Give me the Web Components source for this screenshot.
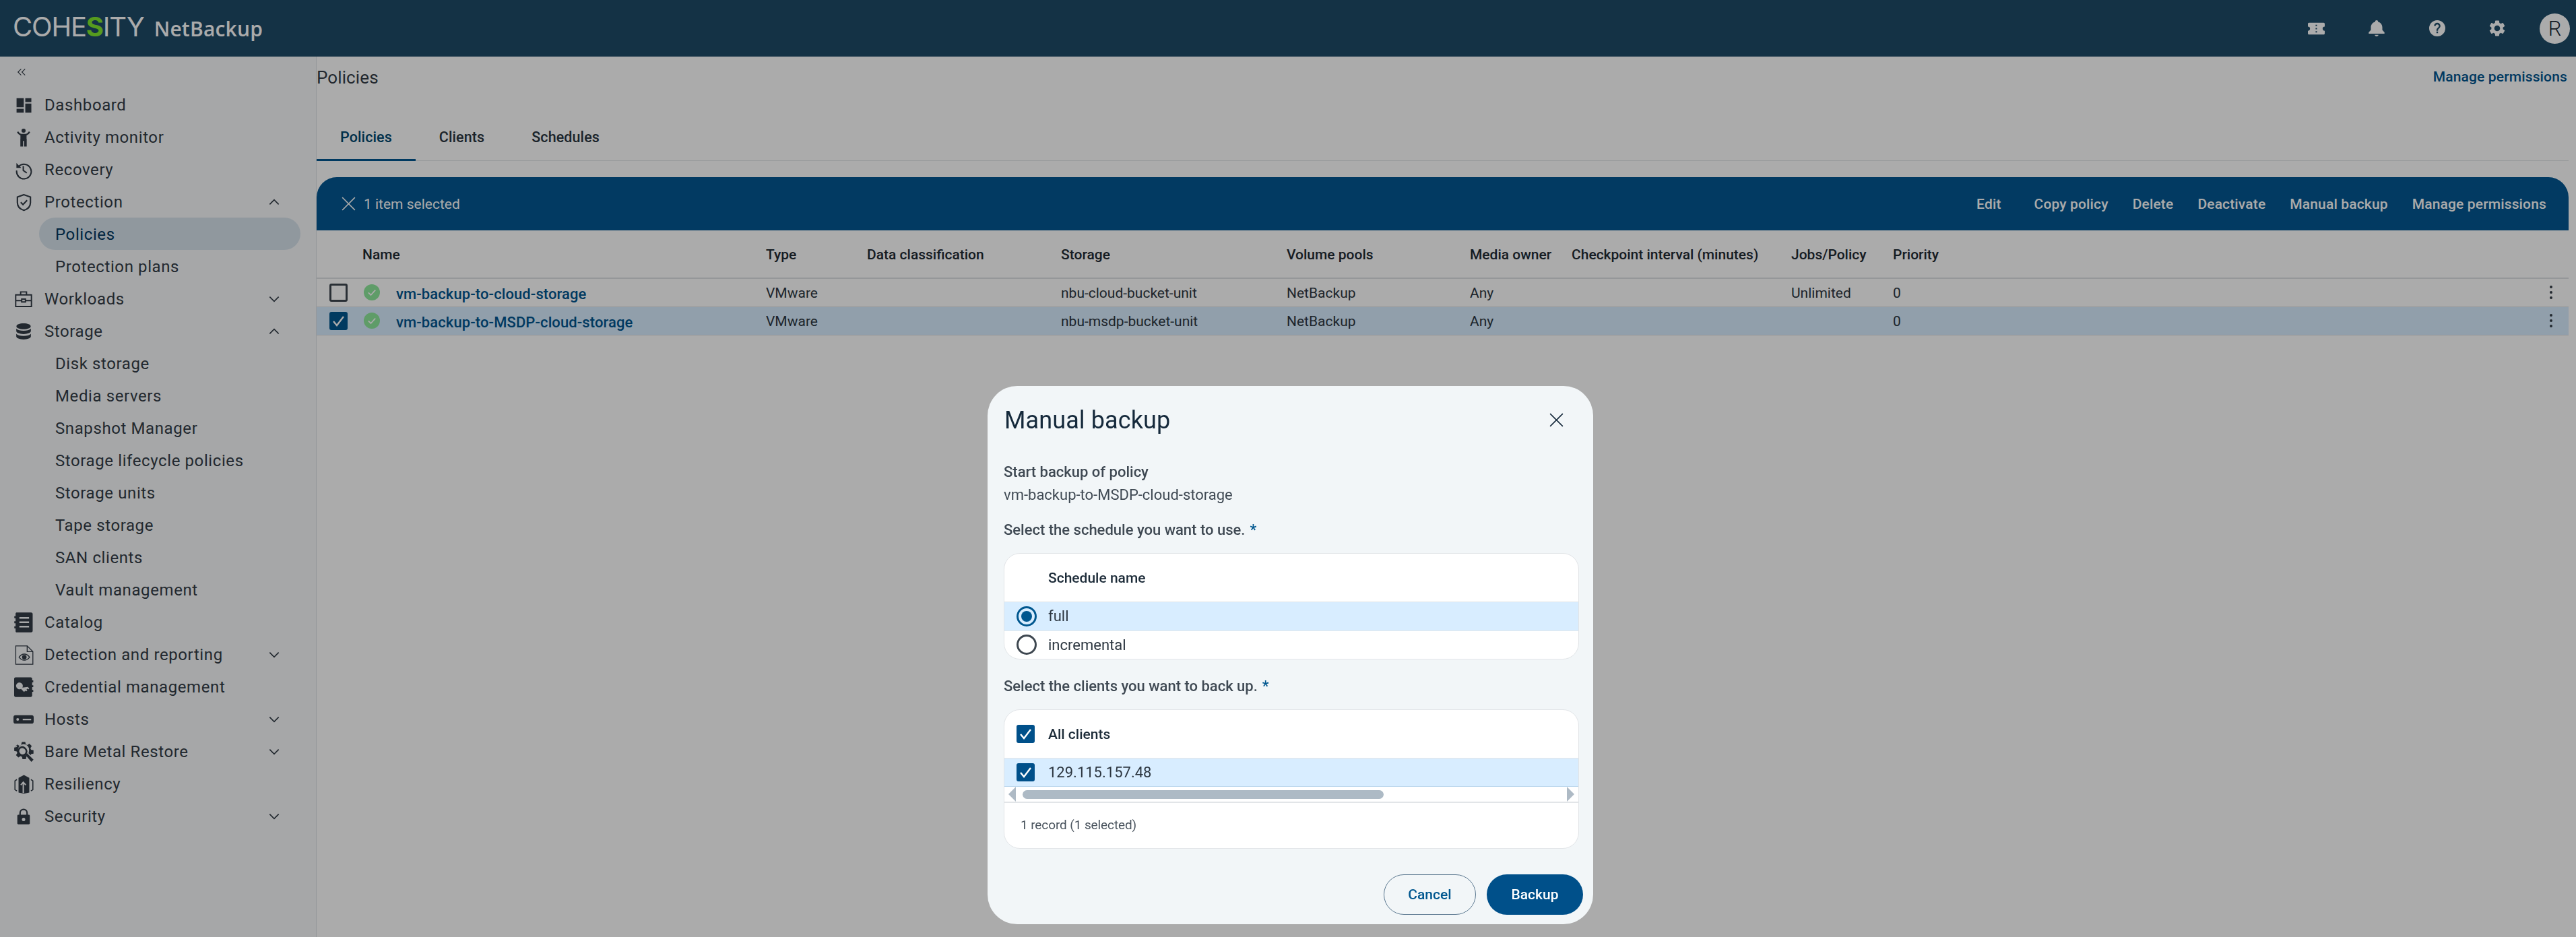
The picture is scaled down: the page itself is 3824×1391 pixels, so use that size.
<!DOCTYPE html>
<html lang="en">
<head>
<meta charset="utf-8">
<title>Policies - NetBackup</title>
<style>
html,body{margin:0;height:100%;overflow:hidden;background:#fff;font-family:Roboto,"Liberation Sans",sans-serif;}
</style>
</head>
<body>
<app-shell></app-shell>
<script>
const ICONS={
 dashboard:'<path fill="currentColor" d="M2.300 2.500h9.500v12H2.300zM2.300 16.500h9.500v5H2.300zM13.800 2.500h8v5h-8zM13.800 9.500h8v12h-8z"/>',
 activity:'<circle fill="currentColor" cx="12" cy="3.400" r="2.600"/><path fill="currentColor" d="M3.600 5.300 5.200 4.200c1.200 1.900 2.800 3.100 4.300 3.300h5c1.500-.2 3.100-1.400 4.300-3.300l1.600 1.100c-1.200 2-2.900 3.500-4.600 4.100V14h.2v9.500h-3.300v-7h-1.400v7H7.900V14H8V9.400C6.400 8.800 4.800 7.300 3.600 5.300z"/>',
 history:'<path fill="none" stroke="currentColor" stroke-width="1.900" d="M5.400 7.400A10 10 0 1 1 2.600 13"/><path fill="currentColor" d="M2.200 2.800v6.600h6.600z"/><path fill="none" stroke="currentColor" stroke-width="1.900" d="M11.600 7v6l4.800 3.400"/>',
 shield:'<path fill="none" stroke="currentColor" stroke-width="1.900" d="M12 1.800 3.400 4.800v7.400c0 5 3.400 8.600 8.600 10.200 5.200-1.600 8.600-5.200 8.600-10.200V4.800z"/><path fill="none" stroke="currentColor" stroke-width="1.900" d="m7.800 11.800 3 3 5.400-5.600"/>',
 briefcase:'<path fill="none" stroke="currentColor" stroke-width="1.800" d="M1.200 6.200h21.600v16H1.200zM8 6.200V2.200h8v4M1.200 14h8M14.800 14h8M9.400 12h5.200v4H9.400z"/>',
 storage:'<path fill="currentColor" d="M12 1c5.400 0 9.800 1.700 9.800 4s-4.400 4-9.800 4-9.800-1.700-9.800-4 4.400-4 9.800-4zM2 8c1.800 2 5.600 3 10 3s8.200-1 10-3v3.600c0 2.200-4.500 4-10 4s-10-1.800-10-4zM2 15.200c1.800 2 5.600 3 10 3s8.200-1 10-3V19c0 2.200-4.500 4-10 4S2 21.200 2 19z"/>',
 catalog:'<path fill="currentColor" fill-rule="evenodd" d="M2.500 1.500C2.500.7 3.200.2 4 .2h17c1 0 1.800.8 1.800 1.800v20c0 1-.8 1.800-1.800 1.800H4c-.8 0-1.500-.6-1.500-1.300V19H1v-2.400h1.500V13H1v-2.400h1.500V7H1V4.600h1.500zM7 5.500v2h11.500v-2zM7 10.800v2h11.500v-2zM7 16v2h11.500v-2z"/>',
 detect:'<path fill="none" stroke="currentColor" stroke-width="1.100" d="M2 .7h14L23 7.700v15.600H2z"/><path fill="none" stroke="currentColor" stroke-width="1.100" d="M16 .7v7h7"/><path fill="none" stroke="currentColor" stroke-width="1.100" d="M6 14.500c3.600-5 9.400-5 13 0-3.600 5-9.400 5-13 0z"/><circle fill="currentColor" cx="12.500" cy="14.500" r="2.800"/>',
 credential:'<path fill="currentColor" fill-rule="evenodd" d="M2.500.3h18c.9 0 1.700.8 1.700 1.700v2h1.300v2.300h-1.300v3.400h1.300V12h-1.300v3.400h1.300v2.300h-1.300V22c0 .9-.8 1.700-1.700 1.700h-18c-.9 0-1.700-.8-1.700-1.700V2C.8 1.100 1.600.3 2.500.3zM10.600 12.500a4 4 0 1 0-1.600 1.600l3.600 3.600 1.500-1.500 1 1 1.400-1.400-1-1 1.100-1.100 1 1 1.200-1.200-1.800-1.800z"/>',
 hosts:'<path fill="currentColor" fill-rule="evenodd" d="M2.500 7h19A2.500 2.500 0 0 1 24 9.500v5a2.500 2.500 0 0 1-2.500 2.500h-19A2.500 2.500 0 0 1 0 14.500v-5A2.500 2.500 0 0 1 2.500 7zM5 10.400a1.600 1.600 0 1 0 0 3.200 1.600 1.600 0 0 0 0-3.200zm6 .7v1.800h10v-1.800z"/>',
 bmr:'<path fill="currentColor" d="M10 .3h4l.6 2.900 1.800.8 2.500-1.600 2.800 2.800-1.600 2.500.8 1.800 2.900.6v4l-2.900.6-.6 1.400-2.400-2.400.6-2.700a6.600 6.600 0 1 0-4.300 4.800l1.800 1.800-.7.3-.6 2.900h-4l-.6-2.900-1.800-.8-2.500 1.600-2.800-2.800 1.600-2.500-.8-1.800-2.900-.6v-4l2.900-.6.8-1.800L1.800 6.100l2.800-2.800 2.500 1.600 1.800-.8z"/><path fill="none" stroke="currentColor" stroke-width="2" d="M7.700 7.400a5 5 0 0 1 6.900 6.900l-1 1a5 5 0 0 1-6.900-6.900z"/><path fill="currentColor" d="m14 15.500 2-2 7.800 7.800-2.600 2.600z"/>',
 resiliency:'<path fill="currentColor" fill-rule="evenodd" d="M12 .5l6.600 3.500v18L12 23.300 5.400 22V4zM11.200 8 7.600 12.200l1.200 1 1.600-1.900v11l1.700.3V11.300l1.600 1.900 1.200-1-3.700-4.200z"/><path fill="none" stroke="currentColor" stroke-width="1.300" d="M3.400 6 1 7.500v11L3.400 20M20.600 6 23 7.500v11L20.600 20"/>',
 lock:'<path fill="currentColor" fill-rule="evenodd" d="M12 .5a6.300 6.300 0 0 1 6.300 6.300v2.700h1.400c.9 0 1.600.7 1.600 1.600v11c0 .9-.7 1.600-1.600 1.600H4.300c-.9 0-1.600-.7-1.600-1.600v-11c0-.9.7-1.600 1.600-1.600h1.400V6.800A6.300 6.300 0 0 1 12 .5zm0 2.200a4.100 4.100 0 0 0-4.100 4.100v2.700h8.200V6.800A4.100 4.100 0 0 0 12 2.700zM12 14a2.500 2.500 0 1 0 0 5 2.500 2.500 0 0 0 0-5z"/>',
 up:'<path fill="none" stroke="currentColor" stroke-width="2" d="m4 16 8-8 8 8"/>',
 down:'<path fill="none" stroke="currentColor" stroke-width="2" d="m4 8 8 8 8-8"/>',
 collapse:'<path fill="none" stroke="currentColor" stroke-width="2" d="M11 4 3 12l8 8M21 4l-8 8 8 8"/>',
 close:'<path fill="none" stroke="currentColor" stroke-width="1.500" d="m3 3 18 18M21 3 3 21"/>',
 ticket:'<path fill="currentColor" fill-rule="evenodd" d="M1.500 3.500h21c.8 0 1.500.7 1.500 1.500v4a3 3 0 0 0 0 6v4c0 .8-.7 1.500-1.500 1.500h-21C.7 20.500 0 19.800 0 19v-4a3 3 0 0 0 0-6V5c0-.8.7-1.500 1.500-1.500zM11 6.500v2h2v-2zM11 11v2h2v-2zM11 15.500v2h2v-2z"/>',
 bell:'<path fill="currentColor" d="M12 24c1.500 0 2.700-.9 2.700-2.200H9.300C9.300 23.100 10.500 24 12 24zm8.500-9.600V11c0-4.300-2.300-7.600-6.300-8.500V2c0-1.200-1-2-2.200-2S9.800.8 9.800 2v.5c-4 .9-6.300 4.200-6.300 8.500v3.400L.3 18v2h23.400v-2z"/>',
 help:'<path fill="currentColor" d="M12 0a12 12 0 1 0 0 24 12 12 0 0 0 0-24zm1.200 19.200h-2.400v-2.400h2.400zm2.400-7.800-1 1.100c-.9.800-1.400 1.500-1.400 3.300h-2.400v-.6c0-1.300.5-2.500 1.400-3.400l1.500-1.500c.4-.4.700-1 .7-1.700 0-1.300-1.100-2.400-2.400-2.400S9.600 7.300 9.600 8.600H7.200a4.800 4.800 0 0 1 9.600 0c0 1-.5 2-1.200 2.800z"/>',
 gear:'<path fill="currentColor" transform="translate(-2.400 -2.400) scale(1.200)" d="M19.140 12.940c.04-.3.06-.61.06-.94 0-.32-.02-.64-.07-.94l2.030-1.580c.18-.14.23-.41.12-.61l-1.920-3.320c-.12-.22-.37-.29-.59-.22l-2.390.96c-.5-.38-1.030-.7-1.620-.94l-.36-2.540c-.04-.24-.24-.41-.48-.41h-3.840c-.24 0-.43.17-.47.41l-.36 2.540c-.59.24-1.130.57-1.620.94l-2.390-.96c-.22-.08-.47 0-.59.22L2.740 8.870c-.12.21-.08.47.12.61l2.030 1.580c-.05.3-.09.63-.09.94s.02.64.07.94l-2.030 1.580c-.18.14-.23.41-.12.61l1.920 3.320c.12.22.37.29.59.22l2.390-.96c.5.38 1.030.7 1.620.94l.36 2.540c.05.24.24.41.48.41h3.840c.24 0 .44-.17.47-.41l.36-2.540c.59-.24 1.130-.56 1.620-.94l2.390.96c.22.08.47 0 .59-.22l1.920-3.320c.12-.22.07-.47-.12-.61l-2.010-1.580zM12 15.600c-1.980 0-3.600-1.620-3.600-3.600s1.620-3.600 3.600-3.600 3.600 1.620 3.600 3.600-1.620 3.600-3.600 3.600z"/>',
 kebab:'<circle fill="currentColor" cx="12" cy="4" r="2"/><circle fill="currentColor" cx="12" cy="12" r="2"/><circle fill="currentColor" cx="12" cy="20" r="2"/>',
 status:'<circle fill="#8ee99b" cx="12" cy="12" r="12"/><path fill="none" stroke="#fff" stroke-width="1.800" d="m6.800 12.300 3.700 3.700 6.700-7.400"/>'
};
function def(name,css,html){
  customElements.define(name,class extends HTMLElement{
    constructor(){super();const s=this.attachShadow({mode:'open'});
      s.innerHTML=`<style>${css}</style>${html}`;}
  });
}
class UiIcon extends HTMLElement{
  connectedCallback(){
    if(this.shadowRoot) return;
    const s=this.attachShadow({mode:'open'});
    const sz=this.getAttribute('size')||24;
    s.innerHTML=`<style>:host{display:inline-flex;flex:none;width:${sz}px;height:${sz}px;}svg{width:100%;height:100%;display:block;overflow:visible}</style><svg viewBox="0 0 24 24" aria-hidden="true">${ICONS[this.getAttribute('name')]||''}</svg>`;
  }
}
customElements.define('ui-icon',UiIcon);

class UiCheck extends HTMLElement{
  connectedCallback(){
    if(this.shadowRoot) return;
    const s=this.attachShadow({mode:'open'});
    const on=this.hasAttribute('checked');
    s.innerHTML=`<style>:host{display:inline-block;flex:none;width:27px;height:27px;box-sizing:border-box;border-radius:3px;border:3px solid #3e4750;}
    :host([checked]){background:var(--check,#00578f);border-color:var(--check,#00578f);}
    svg{display:block;width:27px;height:27px;margin:-3px}</style>${on?'<svg viewBox="0 0 27 27"><path fill="none" stroke="#fff" stroke-width="2.400" d="m6 14 5 6 10-13"/></svg>':''}`;
  }
}
customElements.define('ui-check',UiCheck);

class UiRadio extends HTMLElement{
  connectedCallback(){
    if(this.shadowRoot) return;
    const s=this.attachShadow({mode:'open'});
    s.innerHTML=`<style>:host{display:flex;align-items:center;justify-content:center;flex:none;width:30px;height:30px;box-sizing:border-box;border-radius:50%;border:3px solid #3e4750;}
    :host([checked]){border-color:#00578f;}
    i{width:16px;height:16px;border-radius:50%;background:#00578f;display:none}
    :host([checked]) i{display:block}</style><i></i>`;
  }
}
customElements.define('ui-radio',UiRadio);

class NavItem extends HTMLElement{
  connectedCallback(){
    if(this.shadowRoot) return;
    const s=this.attachShadow({mode:'open'});
    const ic=this.getAttribute('icon'),ch=this.getAttribute('chevron'),sz=this.getAttribute('isize')||24;
    s.innerHTML=`<style>
    :host{display:flex;align-items:center;height:48px;color:#333d47;font-size:24px;letter-spacing:.6px;white-space:nowrap;position:relative}
    .ic{width:70px;margin-right:-4px;flex:none;display:flex;justify-content:center}
    .txt{flex:1}
    .ch{position:absolute;left:397px;top:14px;display:flex}
    :host([sub]) .txt{margin-left:82px}
    :host([active]) .pill{position:absolute;left:58px;width:388px;top:-1px;height:48px;border-radius:24px;background:#d7e3ec;}
    :host([active]) .txt{position:relative;color:#00375f}
    </style><div class="pill"></div>${ic?`<div class="ic"><ui-icon name="${ic}" size="${sz}"></ui-icon></div>`:''}<div class="txt"><slot></slot></div>${ch?`<div class="ch"><ui-icon name="${ch}" size="20"></ui-icon></div>`:''}`;
  }
}
customElements.define('nav-item',NavItem);

def('side-nav',`
:host{display:block;width:469px;flex:none;background:#f8f9fb;border-right:1px solid #dfe3e6;}
.col{height:48px;display:flex;align-items:center;padding:0 0 2px 25px;color:#333d47;box-sizing:border-box}
`,`<div class="col"><ui-icon name="collapse" size="14"></ui-icon></div>
<nav-item icon="dashboard" isize="27">Dashboard</nav-item>
<nav-item icon="activity" isize="28">Activity monitor</nav-item>
<nav-item icon="history" isize="26">Recovery</nav-item>
<nav-item icon="shield" isize="27" chevron="up">Protection</nav-item>
<nav-item sub active>Policies</nav-item>
<nav-item sub>Protection plans</nav-item>
<nav-item icon="briefcase" isize="26" chevron="down">Workloads</nav-item>
<nav-item icon="storage" isize="26" chevron="up">Storage</nav-item>
<nav-item sub>Disk storage</nav-item>
<nav-item sub>Media servers</nav-item>
<nav-item sub>Snapshot Manager</nav-item>
<nav-item sub>Storage lifecycle policies</nav-item>
<nav-item sub>Storage units</nav-item>
<nav-item sub>Tape storage</nav-item>
<nav-item sub>SAN clients</nav-item>
<nav-item sub>Vault management</nav-item>
<nav-item icon="catalog" isize="30">Catalog</nav-item>
<nav-item icon="detect" isize="29" chevron="down">Detection and reporting</nav-item>
<nav-item icon="credential" isize="30">Credential management</nav-item>
<nav-item icon="hosts" chevron="down" isize="30">Hosts</nav-item>
<nav-item icon="bmr" chevron="down" isize="30">Bare Metal Restore</nav-item>
<nav-item icon="resiliency" isize="29">Resiliency</nav-item>
<nav-item icon="lock" chevron="down">Security</nav-item>`);

def('app-header',`
:host{display:flex;align-items:center;height:84px;background:#1f4b68;color:#fff;flex:none;position:relative}
.logo{font-family:Inter,Roboto,sans-serif;font-weight:400;font-size:40px;margin-left:19px;letter-spacing:-1.2px;white-space:nowrap;line-height:84px;height:84px;margin-top:-5px}
.logo b{font-weight:700;color:#80e82e}
.nb{font-family:"Open Sans","Noto Sans",sans-serif;font-weight:600;font-size:30px;margin-left:15px;white-space:nowrap;margin-top:1px;letter-spacing:.2px}
.right{margin-left:auto;display:flex;align-items:center;padding-right:9px}
.btn{width:89.5px;display:flex;justify-content:center}
.avatar{width:45px;height:45px;border-radius:50%;background:#fff;color:#1f2b36;font-size:31px;font-weight:300;display:flex;align-items:center;justify-content:center;margin-left:18px}
`,`<div class="logo">COHE<b>S</b>ITY</div><div class="nb">NetBackup</div>
<div class="right">
<div class="btn"><ui-icon name="ticket" size="25"></ui-icon></div>
<div class="btn"><ui-icon name="bell" size="24"></ui-icon></div>
<div class="btn"><ui-icon name="help" size="24"></ui-icon></div>
<div class="btn"><ui-icon name="gear" size="24"></ui-icon></div>
<div class="avatar">R</div>
</div>`);

def('page-tabs',`
:host{display:flex;height:74px;border-bottom:1px solid #e3e6e8;box-sizing:border-box;font-size:21.5px;font-weight:500;color:#2b3640;letter-spacing:.1px;align-items:stretch}
div{padding:0 35px;display:flex;align-items:center;padding-top:4px;box-sizing:border-box;position:relative}
.a{color:#00486f}
.a::after{content:"";position:absolute;left:0;right:0;bottom:-1px;height:3px;background:#00558f}
`,`<div class="a">Policies</div><div>Clients</div><div>Schedules</div>`);

def('table-row',`
:host{display:grid;grid-template-columns:68px 599px 150px 288px 335px 272px 151px 326px 151px 1fr;align-items:center;height:42px;border-bottom:1px solid #dfe2e5;box-sizing:border-box;font-size:21px;color:#2c3640;white-space:nowrap;position:relative}
:host([head]){height:72px;font-weight:500;color:#1f2a33;border-bottom:2px solid #dfe2e5;padding-top:1px}
:host([selected]){background:#d8edff;}
`,`<slot></slot>`);

def('policy-name',`
:host{display:flex;align-items:center;height:41px;}
ui-icon{margin:-2px 24px 0 2px}
a{color:#00558f;font-weight:500;font-size:22px;text-decoration:none;margin-top:4px;letter-spacing:.1px}
`,`<ui-icon name="status" size="24"></ui-icon><a href="#"><slot></slot></a>`);

def('check-cell',`
:host{display:flex;padding-left:19px;height:41px;align-items:center;margin-top:-1px}
`,`<slot></slot>`);

def('kebab-cell',`
:host{position:absolute;right:14px;top:8px;color:#333d47;display:flex}
`,`<ui-icon name="kebab" size="24"></ui-icon>`);

def('selection-bar',`
:host{display:flex;align-items:center;height:79px;background:#035792;color:#fff;border-radius:30px 30px 0 0;font-size:21px;white-space:nowrap}
ui-icon{margin:0 10px 0 35px}
.acts{margin-left:auto;display:flex;gap:36px;padding-right:33px;font-weight:500;letter-spacing:.15px}
`,`<ui-icon name="close" size="25"></ui-icon><span>1 item selected</span>
<div class="acts"><span>Edit</span><span style="margin-left:13px">Copy policy</span><span>Delete</span><span>Deactivate</span><span>Manual backup</span><span>Manage permissions</span></div>`);

def('policies-page',`
:host{display:block;flex:1;min-width:0;background:#fff;padding-right:11px;}
.t{display:flex;justify-content:space-between;height:81px;align-items:flex-start;color:#333d47;white-space:nowrap;padding-top:16px;box-sizing:border-box}
h1{margin:0;font-size:26px;font-weight:400;letter-spacing:.1px}
a{color:#00558f;font-size:21px;letter-spacing:.15px;font-weight:500;text-decoration:none;margin-right:2px;margin-top:2px}
.sp{height:24px}
`,`<div class="t"><h1>Policies</h1><a href="#">Manage permissions</a></div>
<page-tabs></page-tabs><div class="sp"></div>
<selection-bar></selection-bar>
<table-row head><span></span><span>Name</span><span>Type</span><span>Data classification</span><span>Storage</span><span>Volume pools</span><span>Media owner</span><span>Checkpoint interval (minutes)</span><span>Jobs/Policy</span><span>Priority</span></table-row>
<table-row><check-cell><ui-check></ui-check></check-cell><policy-name>vm-backup-to-cloud-storage</policy-name><span>VMware</span><span></span><span>nbu-cloud-bucket-unit</span><span>NetBackup</span><span>Any</span><span></span><span>Unlimited</span><span>0</span><kebab-cell></kebab-cell></table-row>
<table-row selected><check-cell><ui-check checked></ui-check></check-cell><policy-name>vm-backup-to-MSDP-cloud-storage</policy-name><span>VMware</span><span></span><span>nbu-msdp-bucket-unit</span><span>NetBackup</span><span>Any</span><span></span><span></span><span>0</span><kebab-cell></kebab-cell></table-row>`);

def('dialog-box',`
:host{display:block;border:1px solid #e2e5e8;border-radius:24px;background:#fff;overflow:hidden;margin:0 21px 0 24px;}
`,`<slot></slot>`);

def('box-row',`
:host{display:flex;align-items:center;box-sizing:border-box;height:42px;font-size:22px;color:#2c3640;border-bottom:1px solid #e2e5e8;padding-left:18px;gap:17px;white-space:nowrap}
:host([head]){height:72px;font-weight:500;color:#1c2b38;font-size:21px}
:host([on]){background:#d8edff;border-bottom-color:#b9d6ec}
:host([plain]){border-bottom:0}
`,`<slot></slot>`);

def('fake-scroll',`
:host{display:flex;align-items:center;height:24px;box-sizing:border-box;border-bottom:2px solid #e2e5e8;position:relative;padding:0 6px}
.l,.r{width:0;height:0;border:solid transparent;border-width:11px 0}
.l{border-right:11px solid #aebac5}
.r{border-left:11px solid #aebac5;margin-left:auto}
.th{position:absolute;left:27px;width:536px;height:13px;border-radius:7px;background:#adbac5}
`,`<div class="l"></div><div class="th"></div><div class="r"></div>`);

def('manual-backup-dialog',`
:host{display:block;width:899px;height:799px;box-sizing:border-box;background:#f2f6f8;border-radius:44px;color:#3b4550;position:relative;}
.head{display:flex;align-items:center;justify-content:space-between;height:101px;padding:0 42px 0 25px;color:#15293b;box-sizing:border-box}
h2{margin:0;font-size:36px;font-weight:400;letter-spacing:.1px}
.lbl{font-weight:500;font-size:22px;color:#3f4953;margin-left:24px;display:block;white-space:nowrap}
.req{color:#00578f;margin-left:7px}
.val{font-size:22px;margin:9px 0 0 24px;color:#3f4953;display:block}
.foot{font-size:19px;letter-spacing:-.1px;height:67px;display:flex;align-items:center;padding:0 0 3px 24px;box-sizing:border-box;color:#4a545e}
.acts{display:flex;justify-content:flex-end;gap:16px;margin:38px 15px 0 0}
.b{height:60px;border-radius:30px;display:flex;align-items:center;justify-content:center;font-size:21px;font-weight:500;box-sizing:border-box}
.c{width:137px;border:1.5px solid #5b7890;color:#00578f}
.p{width:143px;background:#00508a;color:#fff}
`,`<div class="head"><h2>Manual backup</h2><ui-icon name="close" size="25"></ui-icon></div>
<div style="height:14px"></div>
<span class="lbl">Start backup of policy</span>
<span class="val">vm-backup-to-MSDP-cloud-storage</span>
<span class="lbl" style="margin-top:27px">Select the schedule you want to use.<span class="req">*</span></span>
<div style="height:22px"></div>
<dialog-box>
<box-row head><span style="width:30px"></span>Schedule name</box-row>
<box-row on><ui-radio checked></ui-radio>full</box-row>
<box-row plain><ui-radio></ui-radio>incremental</box-row>
</dialog-box>
<span class="lbl" style="margin-top:27px">Select the clients you want to back up.<span class="req">*</span></span>
<div style="height:22px"></div>
<dialog-box>
<box-row head style="--check:#00508a"><ui-check checked></ui-check><span style="margin-left:3px">All clients</span></box-row>
<box-row on style="--check:#00508a"><ui-check checked></ui-check><span style="margin-left:3px">129.115.157.48</span></box-row>
<fake-scroll></fake-scroll>
<div class="foot">1 record (1 selected)</div>
</dialog-box>
<div class="acts"><div class="b c">Cancel</div><div class="b p">Backup</div></div>`);

def('modal-layer',`
:host{position:fixed;inset:0;background:rgba(0,0,0,.33);display:flex;justify-content:center;align-items:flex-start;padding:573px 0 0 7px;box-sizing:border-box;}
`,`<manual-backup-dialog></manual-backup-dialog>`);

def('app-shell',`
:host{display:flex;flex-direction:column;height:100vh;overflow:hidden}
.body{display:flex;flex:1;min-height:0;align-items:stretch}
`,`<app-header></app-header><div class="body"><side-nav></side-nav><policies-page></policies-page></div><modal-layer></modal-layer>`);
</script>
</body>
</html>
